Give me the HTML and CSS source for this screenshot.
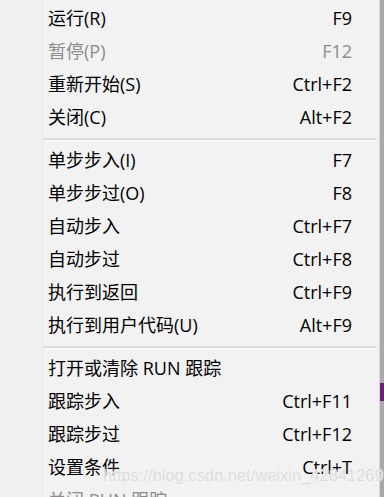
FILE: index.html
```html
<!DOCTYPE html>
<html>
<head>
  <meta charset="utf-8">
  <title>调试菜单</title>
  <link rel="stylesheet" href="styles.css">
</head>
<body>
  <div class="screen">
    <div class="menu">
      <div class="gutter"></div>
      <div class="items">
        <div class="item"><span class="label">运行(R)</span><span class="key">F9</span></div>
        <div class="item disabled"><span class="label">暂停(P)</span><span class="key">F12</span></div>
        <div class="item"><span class="label">重新开始(S)</span><span class="key">Ctrl+F2</span></div>
        <div class="item"><span class="label">关闭(C)</span><span class="key">Alt+F2</span></div>
        <div class="sep"></div>
        <div class="item"><span class="label">单步步入(I)</span><span class="key">F7</span></div>
        <div class="item"><span class="label">单步步过(O)</span><span class="key">F8</span></div>
        <div class="item"><span class="label">自动步入</span><span class="key">Ctrl+F7</span></div>
        <div class="item"><span class="label">自动步过</span><span class="key">Ctrl+F8</span></div>
        <div class="item"><span class="label">执行到返回</span><span class="key">Ctrl+F9</span></div>
        <div class="item"><span class="label">执行到用户代码(U)</span><span class="key">Alt+F9</span></div>
        <div class="sep"></div>
        <div class="item"><span class="label">打开或清除 RUN 跟踪</span><span class="key"></span></div>
        <div class="item"><span class="label">跟踪步入</span><span class="key">Ctrl+F11</span></div>
        <div class="item"><span class="label">跟踪步过</span><span class="key">Ctrl+F12</span></div>
        <div class="item"><span class="label">设置条件</span><span class="key">Ctrl+T</span></div>
        <div class="item disabled"><span class="label">关闭 RUN 跟踪</span><span class="key"></span></div>
      </div>
    </div>
    <div class="edge">
      <div class="edge-top"></div>
      <div class="edge-mark"></div>
      <div class="edge-bottom"></div>
    </div>
    <div class="watermark">https://blog.csdn.net/weixin_42841269</div>
  </div>
</body>
</html>
```

FILE: styles.css
```css
html, body {
  margin: 0;
  padding: 0;
}

body {
  width: 384px;
  height: 497px;
  overflow: hidden;
  font-family: "Open Sans", "Noto Sans CJK SC", sans-serif;
  font-size: 18px;
  color: #000;
}

.screen {
  position: relative;
  display: flex;
  height: 497px;
  overflow: hidden;
}

.menu {
  display: flex;
  width: 379px;
  background: #f2f2f2;
  border-right: 1px solid #d6d6d6;
}

.gutter {
  width: 42px;
  flex-shrink: 0;
  background: #f0f0f0;
  border-right: 1px solid #e9e9e9;
}

.items {
  flex: 1;
  padding-top: 2px;
}

.item {
  display: flex;
  justify-content: space-between;
  align-items: center;
  height: 33px;
  padding: 0 27px 0 5px;
  line-height: 33px;
  white-space: nowrap;
}

.disabled {
  color: #8c8c8c;
}

.sep {
  height: 10px;
  display: flex;
  align-items: center;
  padding-right: 2px;
}

.sep::after {
  content: "";
  display: block;
  width: 100%;
  height: 2px;
  background: #dcdcdc;
  border-bottom: 1px solid #fafafa;
}

.edge {
  width: 4px;
  display: flex;
  flex-direction: column;
}

.edge-top {
  height: 383px;
  background: #a9a9a9;
}

.edge-mark {
  height: 18px;
  background: #6b1f7a;
}

.edge-bottom {
  flex: 1;
  background: #a9a9a9;
}

.watermark {
  position: absolute;
  left: 103px;
  top: 466px;
  font-family: "Liberation Sans", Arial, sans-serif;
  font-size: 16.5px;
  color: #dcdcdc;
  text-shadow: 0 0 1px #fff;
  white-space: nowrap;
}
```
